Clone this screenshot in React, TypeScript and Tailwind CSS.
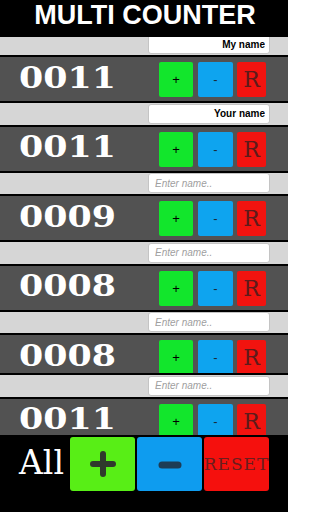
const counters = [
  { id: 1, value: '0011', name: 'My name' },
  { id: 2, value: '0011', name: 'Your name' },
  { id: 3, value: '0009', name: '' },
  { id: 4, value: '0008', name: '' },
  { id: 5, value: '0008', name: '', squeezed: true },
  { id: 6, value: '0011', name: '' },
];

function CounterRow({ value, name, squeezed }: { value: string; name: string; squeezed?: boolean }) {
  return (
    <div>
      {/* Name strip */}
      <div className="h-[21.5px] bg-[#d6d6d6] flex items-center">
        <input
          readOnly
          defaultValue={name}
          placeholder="Enter name.."
          className={`ml-[148px] w-[122px] h-[20px] rounded-[3px] bg-white border border-[#c4c4c4] text-[10px] text-black outline-none placeholder:italic placeholder:text-[#a0a0a0] ${
            name ? 'text-right pr-[4px] font-bold' : 'pl-[6px]'
          }`}
          style={{ fontFamily: '"Liberation Sans", Arial, sans-serif' }}
        />
      </div>
      <div className="h-[2px] bg-black" />

      {/* Counter */}
      <div className={`${squeezed ? 'h-[38px]' : 'h-[44px]'} bg-[#525252] flex overflow-hidden`}>
        <div className="w-[159px] h-[44px] flex items-center pl-[19px] pb-[2px]">
          <span
            className="inline-block origin-left scale-x-[1.2] text-white font-bold text-[29px] leading-none"
            style={{ fontFamily: '"DejaVu Serif", serif' }}
          >
            {value}
          </span>
        </div>
        <div className="flex items-start pt-[5px]">
          <button className="w-[34px] h-[35px] rounded-[2px] bg-[#12e62c] flex items-center justify-center text-[13px] text-black leading-none">
            +
          </button>
          <button className="ml-[5px] w-[35px] h-[35px] rounded-[2px] bg-[#0ea4ef] flex items-center justify-center text-[13px] text-[#1b2a38] leading-none">
            -
          </button>
          <button
            className="ml-[4px] w-[29px] h-[35px] rounded-[2px] bg-[#f2130f] flex items-center justify-center pt-[1px] text-[22px] text-[#5e1b1b] leading-none"
            style={{ fontFamily: '"DejaVu Serif", serif' }}
          >
            R
          </button>
        </div>
      </div>
      <div className="h-[2px] bg-black" />
    </div>
  );
}

export default function App() {
  return (
    <div
      className="w-[288px] h-[512px] flex flex-col bg-black overflow-hidden"
      style={{ fontFamily: '"Liberation Sans", Arial, sans-serif' }}
    >
      {/* Title */}
      <div className="h-[37px] shrink-0 flex justify-center pt-[2px] pl-[2px]">
        <h1 className="text-white font-bold text-[27px] leading-[27px]">MULTI COUNTER</h1>
      </div>

      {/* Counter list */}
      <div className="flex-1 overflow-hidden">
        <div className="-mt-[3.5px]">
          {counters.map((c) => (
            <CounterRow key={c.id} value={c.value} name={c.name} squeezed={c.squeezed} />
          ))}
        </div>
      </div>

      {/* All controls */}
      <div className="h-[77px] shrink-0 flex items-start pt-[2px]">
        <div className="w-[70px] h-[54px] flex items-center pl-[19px] pb-[3px]">
          <span className="text-white text-[33px] leading-none" style={{ fontFamily: '"DejaVu Serif", serif' }}>
            All
          </span>
        </div>
        <button className="w-[65px] h-[54px] rounded-[3px] bg-[#58ee16] flex items-center justify-center">
          <svg width="30" height="30" viewBox="0 0 30 30">
            <path d="M15 5v20M5 15h20" stroke="#2f3a2c" strokeWidth="6" strokeLinecap="round" fill="none" />
          </svg>
        </button>
        <button className="ml-[2px] w-[65px] h-[54px] rounded-[3px] bg-[#0e9cef] flex items-center justify-center">
          <svg width="30" height="30" viewBox="0 0 30 30">
            <path d="M7 16h16" stroke="#1d3c55" strokeWidth="7" strokeLinecap="round" fill="none" />
          </svg>
        </button>
        <button
          className="ml-[2px] w-[65px] h-[54px] rounded-[3px] bg-[#f5100d] flex items-center justify-center whitespace-nowrap text-[17px] tracking-[1px] text-[#6a1d1d] leading-none"
          style={{ fontFamily: '"DejaVu Serif", serif' }}
        >
          RESET
        </button>
      </div>
    </div>
  );
}
